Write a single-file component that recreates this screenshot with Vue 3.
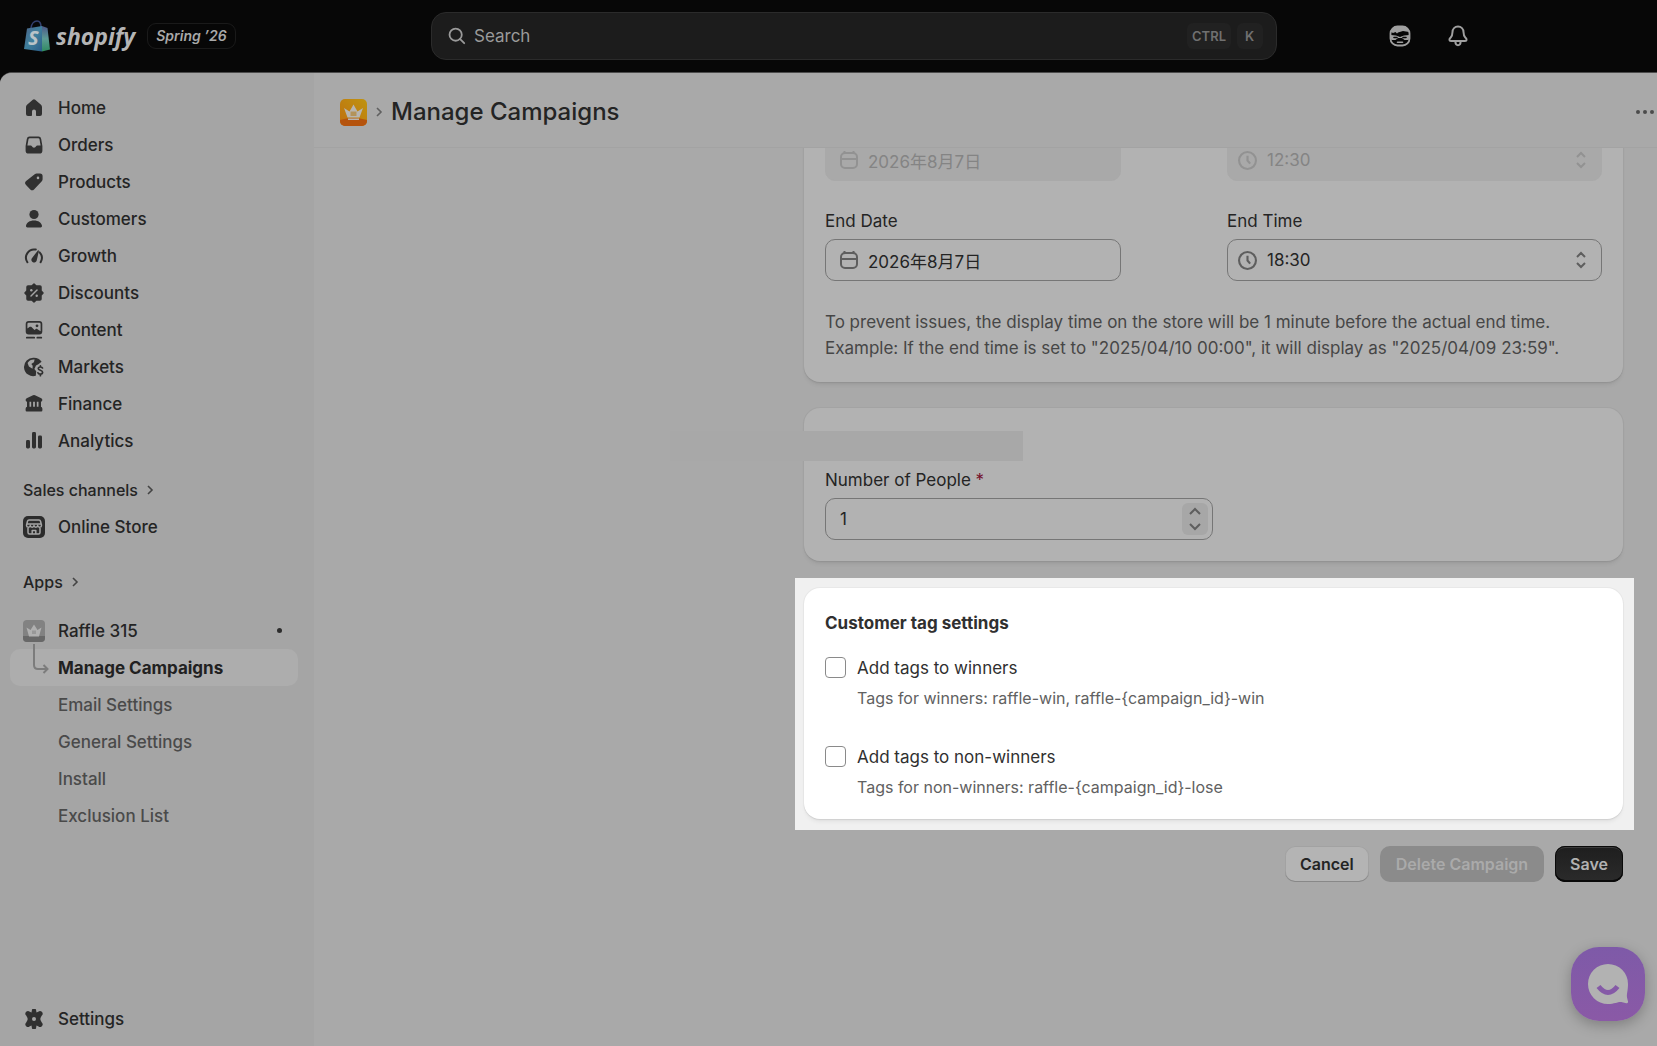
<script setup>
import { ref } from 'vue'

const mainNav = [
  { label: 'Home', icon: 'home' },
  { label: 'Orders', icon: 'orders' },
  { label: 'Products', icon: 'products' },
  { label: 'Customers', icon: 'customers' },
  { label: 'Growth', icon: 'growth' },
  { label: 'Discounts', icon: 'discounts' },
  { label: 'Content', icon: 'content' },
  { label: 'Markets', icon: 'markets' },
  { label: 'Finance', icon: 'finance' },
  { label: 'Analytics', icon: 'analytics' },
]

const icons = {
  home: '<path fill-rule="evenodd" d="M8.800 1.800a1.800 1.800 0 0 1 2.400 0l5.500 4.800c.800.700 1.300 1.600 1.300 2.700v6.700a2 2 0 0 1-2 2h-3.200a.8.8 0 0 1-.8-.8v-3.700a2 2 0 0 0-4 0v3.700a.8.8 0 0 1-.8.8h-3.200a2 2 0 0 1-2-2v-6.700c0-1.100.5-2 1.300-2.700z"/>',
  orders: '<path fill-rule="evenodd" d="M5.600 1.500h8.800a2.800 2.800 0 0 1 2.800 2.400l1.200 7.100v4.400a3.200 3.200 0 0 1-3.200 3.200h-10.400a3.200 3.200 0 0 1-3.200-3.200v-4.400l1.200-7.100a2.800 2.800 0 0 1 2.800-2.400zm.2 1.700a1.300 1.300 0 0 0-1.300 1.100l-1.100 6.200h3.300c.6 0 1 .3 1.200.8a2.300 2.300 0 0 0 4.200 0c.2-.5.7-.8 1.200-.8h3.300l-1.100-6.200a1.300 1.300 0 0 0-1.300-1.100z"/>',
  products: '<path fill-rule="evenodd" d="M10.700 2.200c.6-.6 1.300-.8 2-.8h3.300a2.600 2.600 0 0 1 2.600 2.600v3.300c0 .8-.3 1.500-.8 2l-7.800 8.100a2.600 2.600 0 0 1-3.700 0l-4.500-4.600a2.600 2.600 0 0 1 0-3.600zm3.300 5a1.300 1.300 0 1 0 0-2.600 1.300 1.300 0 0 0 0 2.600z"/>',
  customers: '<circle cx="10" cy="5.500" r="4.600"/><path d="M10 11.500c4.400 0 7.600 2.200 8 5.300.1.900-.5 1.700-1.400 1.700h-13.200c-.9 0-1.500-.8-1.400-1.700.4-3.100 3.600-5.300 8-5.300z"/>',
  growth: '<path d="M3.400 16.200a8.200 8.200 0 0 1 8.400-12.600M16.600 16.200a8.200 8.200 0 0 0-1-9.800" fill="none" stroke="currentColor" stroke-width="2" stroke-linecap="round"/><path d="M13.700 4.700c.3-.7 1.400-.4 1.200.4l-2.200 9.300a2.700 2.700 0 1 1-4.800-2.200z"/>',
  discounts: '<g stroke="currentColor" stroke-width="1.500" stroke-linejoin="round"><path d="M10 1l2.200 2h3.800a1 1 0 0 1 1 1v3.800l2 2.200-2 2.200v3.800a1 1 0 0 1-1 1h-3.800l-2.200 2-2.200-2h-3.800a1 1 0 0 1-1-1v-3.800l-2-2.200 2-2.200v-3.800a1 1 0 0 1 1-1h3.800z"/></g><path d="M7 13l6-6" stroke="var(--icon-gap)" stroke-width="1.500" stroke-linecap="round"/><circle cx="7.300" cy="7.300" r="1.200" fill="var(--icon-gap)"/><circle cx="12.700" cy="12.700" r="1.200" fill="var(--icon-gap)"/>',
  content: '<path fill-rule="evenodd" d="M4.700 1h10.600a3 3 0 0 1 3 3v7.500a3 3 0 0 1-3 3h-10.600a3 3 0 0 1-3-3v-7.500a3 3 0 0 1 3-3zm0 1.700a1.300 1.300 0 0 0-1.300 1.300v4.600l2-1.600c.6-.5 1.500-.5 2.100.1l3 3 1-.9c.6-.5 1.400-.5 2 0l3.100 2v-7.200a1.300 1.300 0 0 0-1.300-1.300z"/><circle cx="13" cy="5.800" r="1.400"/><path d="M2.800 17.700h7.400M13.300 17.700h4" stroke="currentColor" stroke-width="1.700" stroke-linecap="round"/>',
  markets: '<path fill-rule="evenodd" d="M10 .8a9.200 9.200 0 0 1 7.600 4l-3.200 2.400-2.400 1.400-1.600 3.400 1.800 2.200-.4 4.600a9.200 9.200 0 1 1-1.800-18zm.6 1.800a7.400 7.400 0 0 0-7 3.400l1.300 3.400 3.600 2.300.2-2.900-1.400-1.700 2.600-1.800z"/><path d="M18.500 11c-.4-1.200-4.200-1.600-4.200.6s4.300 1.200 4.300 3.700c0 2.300-4 2.300-4.700.5M16.400 8.800v1.200M16.400 17v1.700" fill="none" stroke="currentColor" stroke-width="1.700" stroke-linecap="round"/>',
  finance: '<path d="M9 1.300a2 2 0 0 1 2 0l6.300 3c1.700.9 1.200 3.500-.7 3.500h-13.200c-1.900 0-2.400-2.600-.7-3.500z"/><path d="M3 7h2.500v6.500h-2.500zM7.200 7h1.900v6.500h-1.900zM10.900 7h1.900v6.500h-1.900zM14.500 7h2.500v6.500h-2.500z"/><path d="M3.500 12.800h13a2 2 0 0 1 1.900 2v1.500a1.200 1.200 0 0 1-1.200 1.200h-14.400a1.200 1.200 0 0 1-1.200-1.200v-1.500a2 2 0 0 1 1.900-2z"/>',
  analytics: '<rect x="2" y="9" width="4" height="8.500" rx="1.400"/><rect x="8" y="1" width="4" height="16.500" rx="1.400"/><rect x="14" y="4.500" width="4" height="13" rx="1.400"/>',
}

const appPages = ['Manage Campaigns', 'Email Settings', 'General Settings', 'Install', 'Exclusion List']

const startDate = ref('2026年8月7日')
const endDate = ref('2026年8月7日')
const startTime = ref('12:30')
const endTime = ref('18:30')
const people = ref('1')
const tagWinners = ref(false)
const tagNonWinners = ref(false)
</script>

<template>
  <div class="app">
    <header class="topbar">
      <div class="brand">
        <svg class="bag" viewBox="0 0 28 32" aria-hidden="true">
          <defs>
            <linearGradient id="bagFront" x1="0" y1="0" x2="1" y2="1">
              <stop offset="0" stop-color="#4d6488" />
              <stop offset=".5" stop-color="#3f7f9c" />
              <stop offset="1" stop-color="#2a5c88" />
            </linearGradient>
            <linearGradient id="bagSide" x1="0" y1="0" x2="0" y2="1">
              <stop offset="0" stop-color="#4c5788" />
              <stop offset=".5" stop-color="#5c9a94" />
              <stop offset="1" stop-color="#2f8a60" />
            </linearGradient>
          </defs>
          <path d="M8 8c.5-4 3-7 6-7 2.500 0 4 2 4 6" fill="none" stroke="#33406e" stroke-width="1.600" />
          <path d="M4 8.500L19 6v25.500L1 29z" fill="url(#bagFront)" />
          <path d="M19 6l5.500 2L27 29.500l-8 2z" fill="url(#bagSide)" />
          <text x="5" y="25" class="bag-letter">S</text>
        </svg>
        <span class="wordmark">shopify</span>
        <span class="edition">Spring ’26</span>
      </div>
      <button class="search" type="button">
        <svg class="search-icon" viewBox="0 0 20 20" fill="none" stroke="currentColor" stroke-width="2" stroke-linecap="round">
          <circle cx="8.500" cy="8.500" r="6.800" /><path d="M13.500 13.500l4.500 4.500" />
        </svg>
        <span class="search-text">Search</span>
        <kbd>CTRL</kbd><kbd>K</kbd>
      </button>
      <div class="top-actions">
        <button type="button" aria-label="Assistant">
          <svg viewBox="0 0 22 22">
            <rect x="1.500" y="1.500" width="19" height="19" rx="7" fill="none" stroke="currentColor" stroke-width="1.800" />
            <path d="M2 7c0-3.500 3-5.500 9-5.500s9 2 9 5.500l-6-1-5 1.500-1 1-1.500-1.500-2.500 1z" fill="currentColor" />
            <path d="M1.500 10l5.500.5 4 1.500 4-1.500 5.500-.5v2.500l-1 2.500h-4l-2.500-2h-4l-2.500 2h-4l-1-2.500z" fill="currentColor" />
            <path d="M5 12.500h3M14 12.500h3" stroke="#070707" stroke-width="1.600" stroke-linecap="round" />
            <path d="M8.500 17.200h5" stroke="currentColor" stroke-width="1.600" stroke-linecap="round" />
          </svg>
        </button>
        <button type="button" aria-label="Notifications">
          <svg viewBox="0 0 22 22" fill="none" stroke="currentColor" stroke-width="2" stroke-linejoin="round">
            <path d="M11 1.500c-3.300 0-5.400 2.400-5.500 5.500-.1 3-.5 4.200-1.800 5.500-1.800 1.700-1.700 3.500.3 3.500h14c2 0 2.100-1.800.3-3.500-1.300-1.300-1.700-2.500-1.800-5.500-.1-3.100-2.200-5.500-5.500-5.500z" />
            <path d="M8.300 16.500c.2 2.600 1.200 3.700 2.700 3.700s2.500-1.100 2.700-3.700" />
          </svg>
        </button>
      </div>
    </header>

    <div class="frame">
      <nav class="sidebar" aria-label="Main">
        <ul>
          <li v-for="item in mainNav" :key="item.label">
            <a href="#" class="nav-item">
              <svg class="nav-icon" viewBox="0 0 20 20" fill="currentColor" v-html="icons[item.icon]" />
              {{ item.label }}
            </a>
          </li>
        </ul>
        <a href="#" class="section-link">
          Sales channels
          <svg viewBox="0 0 10 10"><path d="M3 1l4 4-4 4" /></svg>
        </a>
        <a href="#" class="nav-item">
          <svg class="store-icon" viewBox="0 0 22 22" fill="none" stroke="currentColor" stroke-width="1.500">
            <rect width="22" height="22" rx="5" fill="currentColor" stroke="none" />
            <g stroke="#a5a5a5" stroke-linejoin="round">
              <path d="M6 4h10c1 0 1.300.5 1.500 1.300l1 4c0 2.500-3.500 2.700-3.800.2-.3 2.400-3.400 2.400-3.700 0-.3 2.400-3.400 2.400-3.700 0-.3 2.500-3.800 2.300-3.800-.2l1-4c.2-.8.500-1.300 1.500-1.300zM4.500 8h13" />
              <path d="M5 12v4.500c0 1 .5 1.500 1.500 1.500h9c1 0 1.500-.5 1.500-1.500v-4.500M9.200 18v-3.500h3.600v3.500" />
            </g>
          </svg>
          Online Store
        </a>
        <a href="#" class="section-link apps">
          Apps
          <svg viewBox="0 0 10 10"><path d="M3 1l4 4-4 4" /></svg>
        </a>
        <a href="#" class="nav-item app-item">
          <svg class="store-icon" viewBox="0 0 22 22">
            <rect width="22" height="22" rx="4" fill="#828282" />
            <path d="M0 16h22v2a4 4 0 0 1-4 4h-14a4 4 0 0 1-4-4z" fill="#686868" />
            <path d="M3.500 7.500l4 2.500 3.500-5.500 3.500 5.500 4-2.500-2.500 9h-10z" fill="#b0b0b0" />
            <path d="M9 10.500h4v3.500h-4z" fill="#989898" />
          </svg>
          Raffle 315
          <span class="dot" />
        </a>
        <ul>
          <li v-for="(page, i) in appPages" :key="page">
            <a href="#" class="nav-item sub-item" :class="{ current: i === 0 }">
              <svg v-if="i === 0" class="branch" viewBox="0 0 18 34">
                <path d="M2 0v21q0 4 4 4h9M11.500 21l4 4-4 4" />
              </svg>
              {{ page }}
            </a>
          </li>
        </ul>
        <a href="#" class="nav-item settings">
          <svg class="nav-icon" viewBox="0 0 20 20">
            <path d="M7.800 1.700a2.200 2.200 0 0 1 4.400 0l.3 1.800 1.700-.7a2.200 2.200 0 0 1 3.600 3.700l-1.200 2.200c-.3.700-.3 1.900 0 2.600l1.200 2.200a2.200 2.200 0 0 1-3.600 3.700l-1.700-.7-.3 1.800a2.200 2.200 0 0 1-4.400 0l-.3-1.800-1.700.7a2.200 2.200 0 0 1-3.600-3.700l1.200-2.200c.3-.7.3-1.900 0-2.600l-1.200-2.200a2.200 2.200 0 0 1 3.600-3.700l1.700.7z" fill="currentColor" />
            <circle cx="10" cy="10" r="2" fill="#a5a5a5" />
          </svg>
          Settings
        </a>
      </nav>

      <main class="main">
        <div class="page-head">
          <svg class="app-logo" viewBox="0 0 27 27" aria-hidden="true">
            <defs>
              <linearGradient id="appBg" x1="1" y1="0" x2="0" y2="1">
                <stop offset="0" stop-color="#bf9410" />
                <stop offset="1" stop-color="#bf6f10" />
              </linearGradient>
            </defs>
            <rect width="27" height="27" rx="5" fill="url(#appBg)" />
            <path d="M0 21q13-4 27 0v1a5 5 0 0 1-5 5h-17a5 5 0 0 1-5-5z" fill="#b5530d" />
            <path d="M4 9l5.500 3.500 4-7 4 7L23 9l-3.500 9.500h-12z" fill="#b8b5b0" />
            <path d="M8 19.500h11v1.500h-11z" fill="#b8b5b0" />
            <path d="M10.500 12.500h6v4.500h-6z" fill="#b3935a" />
          </svg>
          <svg class="crumb" viewBox="0 0 10 10"><path d="M3 1l4 4-4 4" /></svg>
          <h1>Manage Campaigns</h1>
          <button type="button" class="more" aria-label="More actions">
            <svg viewBox="0 0 20 6"><circle cx="3" cy="3" r="2" /><circle cx="10" cy="3" r="2" /><circle cx="17" cy="3" r="2" /></svg>
          </button>
        </div>

        <div class="scroller">
          <form class="form" @submit.prevent>
            <section class="card schedule">
              <div class="row">
                <div class="control date disabled">
                  <svg class="lead" viewBox="0 0 18 18"><rect x="1" y="2" width="16" height="15" rx="4" /><path d="M1 8h16M4.500 0v2M13.500 0v2" /></svg>
                  <input v-model="startDate" type="text" aria-label="Start Date" disabled />
                </div>
                <div class="control time disabled">
                  <svg class="lead" viewBox="0 0 18 18"><circle cx="9" cy="9" r="8" /><path d="M9 4.500v4.500l2.500 3" /></svg>
                  <select v-model="startTime" aria-label="Start Time" disabled><option>12:30</option></select>
                  <svg class="updown" viewBox="0 0 12 18"><path d="M2 6l4-4 4 4M2 12l4 4 4-4" /></svg>
                </div>
              </div>
              <div class="row">
                <div class="field date">
                  <label for="end-date">End Date</label>
                  <div class="control">
                    <svg class="lead" viewBox="0 0 18 18"><rect x="1" y="2" width="16" height="15" rx="4" /><path d="M1 8h16M4.500 0v2M13.500 0v2" /></svg>
                    <input id="end-date" v-model="endDate" type="text" />
                  </div>
                </div>
                <div class="field time">
                  <label for="end-time">End Time</label>
                  <div class="control">
                    <svg class="lead" viewBox="0 0 18 18"><circle cx="9" cy="9" r="8" /><path d="M9 4.500v4.500l2.500 3" /></svg>
                    <select id="end-time" v-model="endTime"><option>18:30</option></select>
                    <svg class="updown" viewBox="0 0 12 18"><path d="M2 6l4-4 4 4M2 12l4 4 4-4" /></svg>
                  </div>
                </div>
              </div>
              <p class="note">
                To prevent issues, the display time on the store will be 1 minute before the actual end time.<br />
                Example: If the end time is set to "2025/04/10 00:00", it will display as "2025/04/09 23:59".
              </p>
            </section>

            <section class="card people">
              <div class="mask" />
              <div class="field number">
                <label for="people">Number of People <span class="required">*</span></label>
                <div class="control">
                  <input id="people" v-model="people" type="text" inputmode="numeric" />
                  <div class="stepper">
                    <button type="button" aria-label="Increase"><svg viewBox="0 0 14 8"><path d="M2 7l5-5 5 5" /></svg></button>
                    <button type="button" aria-label="Decrease"><svg viewBox="0 0 14 8"><path d="M2 1l5 5 5-5" /></svg></button>
                  </div>
                </div>
              </div>
            </section>

            <div class="spotlight">
              <section class="card tags">
                <h2>Customer tag settings</h2>
                <div class="choice">
                  <input id="tag-win" v-model="tagWinners" type="checkbox" aria-describedby="tag-win-help" />
                  <div>
                    <label for="tag-win">Add tags to winners</label>
                    <p id="tag-win-help">Tags for winners: raffle-win, raffle-{campaign_id}-win</p>
                  </div>
                </div>
                <div class="choice">
                  <input id="tag-lose" v-model="tagNonWinners" type="checkbox" aria-describedby="tag-lose-help" />
                  <div>
                    <label for="tag-lose">Add tags to non-winners</label>
                    <p id="tag-lose-help">Tags for non-winners: raffle-{campaign_id}-lose</p>
                  </div>
                </div>
              </section>
            </div>

            <div class="actions">
              <button type="button" class="btn">Cancel</button>
              <button type="button" class="btn delete" disabled>Delete Campaign</button>
              <button type="submit" class="btn save">Save</button>
            </div>
          </form>
        </div>
      </main>
    </div>

    <button type="button" class="chat" aria-label="Open chat">
      <svg viewBox="0 0 40 40">
        <path d="M20 0a20 20 0 0 1 20 20c0 7-1.500 10-1 13.500l1 4c.3 1.200-.6 2-1.700 1.700l-4-1c-4-.9-7 1.800-14.300 1.800a20 20 0 0 1 0-40z" fill="#b2b2b2" />
        <path d="M10.500 22.500q9.500 12 19 0" fill="none" stroke="#855aa7" stroke-width="5" />
      </svg>
    </button>
  </div>
</template>

<style>
body {
  background: #070707;
}
</style>

<style scoped>
.app {
  --icon-gap: #a5a5a5;
  min-height: 100vh;
  display: flex;
  flex-direction: column;
  background: #070707;
  color: #242424;
  font-family: Inter, "Noto Sans CJK SC", sans-serif;
  font-size: 17px;
}
.app *,
.app *::before {
  box-sizing: border-box;
}
button,
input,
select {
  font: inherit;
  color: inherit;
  border: 0;
  padding: 0;
  margin: 0;
  background: none;
}
a {
  color: inherit;
  text-decoration: none;
}
ul {
  list-style: none;
  margin: 0;
  padding: 0;
}
h1,
h2,
p {
  margin: 0;
}
svg {
  display: block;
  flex: none;
}

.topbar {
  display: grid;
  grid-template-columns: 431px 1fr 380px;
  align-items: center;
  height: 72px;
}
.brand {
  display: flex;
  align-items: center;
  padding-left: 23px;
}
.bag {
  width: 28px;
  height: 32px;
}
.bag-letter {
  font: italic 700 20px "Noto Sans", sans-serif;
  fill: #b9c3c8;
}
.wordmark {
  margin-left: 5px;
  font: italic 700 23px/32px "Open Sans", sans-serif;
  color: #b5b5b5;
}
.edition {
  margin-left: 12px;
  padding: 0 8px;
  border: 1px solid #1a1a1a;
  border-radius: 9px;
  font-size: 14px;
  line-height: 24px;
  font-weight: 600;
  font-style: italic;
  color: #a9a9a9;
}
.search {
  display: flex;
  align-items: center;
  height: 48px;
  padding: 0 13px 0 16px;
  border: 1px solid #2b2b2b;
  border-radius: 15px;
  background: #1c1c1c;
  color: #9a9a9a;
  text-align: left;
}
.search-icon {
  width: 18px;
  height: 18px;
}
.search-text {
  flex: 1;
  margin-left: 8px;
}
kbd {
  margin-left: 6px;
  padding: 0 8px;
  min-width: 26px;
  border-radius: 6px;
  background: #212121;
  color: #707070;
  font: 600 13px/26px Inter, sans-serif;
}
kbd:first-of-type {
  padding: 0 5px;
}
.top-actions {
  display: flex;
  gap: 22px;
  padding-left: 105px;
  color: #a0a0a0;
}
.top-actions button {
  display: grid;
  place-items: center;
  width: 36px;
  height: 36px;
}
.top-actions svg {
  width: 22px;
  height: 22px;
}

.frame {
  flex: 1;
  display: flex;
  border-top: 1px solid #4c4c4c;
  border-radius: 12px 0 0 0;
  background: #a9a9a9;
  overflow: hidden;
}
.sidebar {
  flex: none;
  width: 314px;
  display: flex;
  flex-direction: column;
  padding: 16px 16px 9px 10px;
  background: #a5a5a5;
  font-weight: 550;
}
.nav-item {
  display: flex;
  align-items: center;
  height: 37px;
  padding: 0 14px;
  border-radius: 10px;
}
.nav-icon {
  width: 20px;
  height: 20px;
  margin-right: 14px;
  color: #303030;
}
.store-icon {
  width: 22px;
  height: 22px;
  margin: 0 13px 0 -1px;
  color: #2c2c2c;
}
.section-link {
  display: flex;
  align-items: center;
  gap: 7px;
  height: 36px;
  margin-top: 13px;
  padding-left: 13px;
  font-size: 16px;
}
.section-link svg {
  width: 10px;
  height: 10px;
}
.section-link path,
.crumb path {
  fill: none;
  stroke: #444;
  stroke-width: 1.600;
}
.apps {
  margin-top: 19px;
}
.app-item {
  margin-top: 12px;
}
.dot {
  width: 5px;
  height: 5px;
  margin-left: auto;
  margin-right: 2px;
  border-radius: 50%;
  background: #2c2c2c;
}
.sub-item {
  position: relative;
  padding-left: 48px;
  color: #4a4a4a;
  font-weight: 500;
}
.sub-item.current {
  background: #adadad;
  color: #212121;
  font-weight: 650;
}
.branch {
  position: absolute;
  left: 22px;
  top: -5px;
  width: 18px;
  height: 34px;
  fill: none;
  stroke: #7c7c7c;
  stroke-width: 2;
}
.settings {
  margin-top: auto;
}

.main {
  flex: 1;
  min-width: 0;
  display: flex;
  flex-direction: column;
}
.page-head {
  display: flex;
  align-items: center;
  height: 75px;
  padding: 4px 2px 0 26px;
  border-bottom: 1px solid #a3a3a3;
}
.app-logo {
  width: 27px;
  height: 27px;
}
.crumb {
  width: 10px;
  height: 10px;
  margin: 0 7px;
}
.crumb path {
  stroke: #606060;
}
h1 {
  font-size: 24px;
  line-height: 32px;
  font-weight: 550;
}
.more {
  margin-left: auto;
}
.more svg {
  width: 20px;
  height: 6px;
  fill: #4c4c4c;
}

.scroller {
  flex: 1;
  padding: 0 34px 0 35px;
  overflow: hidden;
  display: grid;
  grid-template-columns: 5fr 9fr;
  align-items: start;
}
.form {
  grid-column: 2;
  min-width: 0;
}
.card {
  padding: 21px;
  border-radius: 16px;
  background: #b2b2b2;
  box-shadow: 0 1px 1px #929292, 0 0 0 1px #a3a3a3, 0 4px 5px -2px rgba(0, 0, 0, 0.1);
}
.schedule {
  margin-top: -30px;
}
.row {
  display: flex;
  justify-content: space-between;
}
.row + .row {
  margin-top: 28px;
}
.date {
  flex: 0 1 296px;
  min-width: 0;
}
.time {
  flex: 0 1 375px;
  min-width: 0;
}
.field label {
  display: block;
  margin-bottom: 6px;
  line-height: 24px;
}
.control {
  display: flex;
  align-items: center;
  height: 42px;
  padding: 0 14px;
  border: 1px solid #767676;
  border-radius: 10px;
}
.control.disabled {
  border-color: #a9a9a9;
  background: #a9a9a9;
  color: #848484;
}
.control input,
.control select {
  flex: 1;
  width: 100%;
  min-width: 0;
  height: 38px;
  appearance: none;
  opacity: 1;
}
.lead {
  width: 18px;
  height: 18px;
  margin-right: 10px;
  fill: none;
  stroke: #5e5e5e;
  stroke-width: 2;
}
.time .lead {
  width: 19px;
  height: 19px;
}
.time .control,
.time.control {
  padding-left: 10px;
}
.updown {
  width: 12px;
  height: 18px;
  fill: none;
  stroke: #5e5e5e;
  stroke-width: 2;
}
.disabled svg {
  stroke: #929292;
}
.note {
  margin-top: 28px;
  line-height: 26px;
  color: #464646;
}

.people {
  position: relative;
  margin-top: 26px;
  padding-top: 60px;
}
.mask {
  position: absolute;
  left: -134px;
  top: 23px;
  width: 353px;
  height: 30px;
  background: #a8a8a8;
}
.number {
  max-width: 388px;
}
.number .control {
  padding-right: 4px;
}
.required {
  color: #74102a;
}
.stepper {
  flex: none;
  display: flex;
  flex-direction: column;
  width: 26px;
  height: 32px;
  border-radius: 6px;
  background: #a7a7a7;
}
.stepper button {
  flex: 1;
  display: grid;
  place-items: center;
}
.stepper svg {
  width: 14px;
  height: 8px;
  fill: none;
  stroke: #5e5e5e;
  stroke-width: 2;
}

.spotlight {
  margin: 17px -11px 0 -9px;
  padding: 10px 11px 11px 9px;
  background: #f0f0f0;
  color: #303030;
}
.tags {
  padding-bottom: 20px;
  background: #fff;
  box-shadow: 0 1px 1px #d0d0d0, 0 0 0 1px #e8e8e8, 0 4px 5px -2px rgba(0, 0, 0, 0.08);
}
h2 {
  font-size: 17px;
  line-height: 28px;
  font-weight: 650;
}
.choice {
  display: flex;
  gap: 11px;
  margin-top: 18px;
}
.choice + .choice {
  margin-top: 34px;
}
.choice input {
  flex: none;
  appearance: none;
  width: 21px;
  height: 21px;
  margin-top: 2px;
  border: 1px solid #8a8a8a;
  border-radius: 4px;
  background: #fff;
}
.choice label {
  display: block;
  line-height: 26px;
}
.choice p {
  margin-top: 5px;
  font-size: 16px;
  line-height: 24px;
  color: #616161;
}

.actions {
  display: flex;
  justify-content: flex-end;
  gap: 11px;
  margin-top: 16px;
}
.btn {
  height: 36px;
  padding: 0 15px;
  border-radius: 10px;
  background: #b4b4b4;
  box-shadow: inset 0 -1px 0 #888, inset 0 0 0 1px #a2a2a2;
  font-size: 16px;
  font-weight: 600;
}
.delete {
  padding: 0 16px;
  background: #8b8b8b;
  box-shadow: none;
  color: #aaa;
}
.save {
  background: linear-gradient(#1e1e1e, #2b2b2b);
  box-shadow: inset 0 0 0 1px #0a0a0a, inset 0 2px 0 #3c3c3c, inset 0 -2px 0 #0a0a0a;
  color: #b2b2b2;
}

.chat {
  position: fixed;
  right: 12px;
  bottom: 25px;
  display: grid;
  place-items: center;
  width: 74px;
  height: 74px;
  border-radius: 28px;
  background: linear-gradient(#7e5aa8, #8a59a6);
  box-shadow: 0 4px 14px rgba(0, 0, 0, 0.25);
}
.chat svg {
  width: 40px;
  height: 40px;
}
</style>
